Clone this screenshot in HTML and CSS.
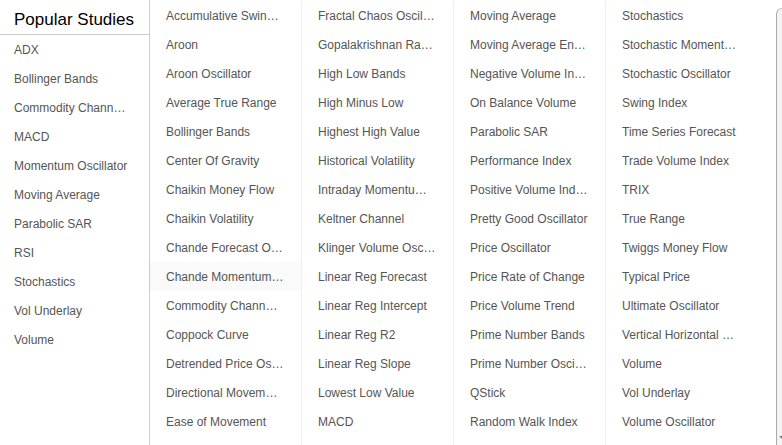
FILE: index.html
```html
<!DOCTYPE html>
<html>
<head>
<meta charset="utf-8">
<link rel="stylesheet" href="styles.css">
</head>
<body>
<div class="page">
  <div class="side">
    <div class="side-title">Popular Studies</div>
    <ul class="side-list">
      <li>ADX</li>
      <li>Bollinger Bands</li>
      <li>Commodity Chann…</li>
      <li>MACD</li>
      <li>Momentum Oscillator</li>
      <li>Moving Average</li>
      <li>Parabolic SAR</li>
      <li>RSI</li>
      <li>Stochastics</li>
      <li>Vol Underlay</li>
      <li>Volume</li>
    </ul>
  </div>
  <div class="cols">
    <ul class="col">
      <li>Accumulative Swing Index</li>
      <li>Aroon</li>
      <li>Aroon Oscillator</li>
      <li>Average True Range</li>
      <li>Bollinger Bands</li>
      <li>Center Of Gravity</li>
      <li>Chaikin Money Flow</li>
      <li>Chaikin Volatility</li>
      <li>Chande Forecast Oscillator</li>
      <li class="hover">Chande Momentum Oscillator</li>
      <li>Commodity Channel Index</li>
      <li>Coppock Curve</li>
      <li>Detrended Price Oscillator</li>
      <li>Directional Movement System</li>
      <li>Ease of Movement</li>
    </ul>
    <ul class="col">
      <li>Fractal Chaos Oscillator</li>
      <li>Gopalakrishnan Range Index</li>
      <li>High Low Bands</li>
      <li>High Minus Low</li>
      <li>Highest High Value</li>
      <li>Historical Volatility</li>
      <li>Intraday Momentum Index</li>
      <li>Keltner Channel</li>
      <li>Klinger Volume Oscillator</li>
      <li>Linear Reg Forecast</li>
      <li>Linear Reg Intercept</li>
      <li>Linear Reg R2</li>
      <li>Linear Reg Slope</li>
      <li>Lowest Low Value</li>
      <li>MACD</li>
    </ul>
    <ul class="col">
      <li>Moving Average</li>
      <li>Moving Average Envelope</li>
      <li>Negative Volume Index</li>
      <li>On Balance Volume</li>
      <li>Parabolic SAR</li>
      <li>Performance Index</li>
      <li>Positive Volume Index</li>
      <li>Pretty Good Oscillator</li>
      <li>Price Oscillator</li>
      <li>Price Rate of Change</li>
      <li>Price Volume Trend</li>
      <li>Prime Number Bands</li>
      <li>Prime Number Oscillator</li>
      <li>QStick</li>
      <li>Random Walk Index</li>
    </ul>
    <ul class="col">
      <li>Stochastics</li>
      <li>Stochastic Momentum Index</li>
      <li>Stochastic Oscillator</li>
      <li>Swing Index</li>
      <li>Time Series Forecast</li>
      <li>Trade Volume Index</li>
      <li>TRIX</li>
      <li>True Range</li>
      <li>Twiggs Money Flow</li>
      <li>Typical Price</li>
      <li>Ultimate Oscillator</li>
      <li>Vertical Horizontal Filter</li>
      <li>Volume</li>
      <li>Vol Underlay</li>
      <li>Volume Oscillator</li>
    </ul>
  </div>
  <div class="scroll">
    <div class="thumb"></div>
    <div class="arrow"></div>
  </div>
</div>
</body>
</html>
```
FILE: styles.css
```css
html, body {
  margin: 0;
  padding: 0;
  background: #fff;
}
body {
  font-family: "Liberation Sans", Arial, sans-serif;
  font-size: 12px;
  color: #555;
}
ul {
  list-style: none;
  margin: 0;
  padding: 0;
}
.page {
  display: flex;
  width: 782px;
  height: 445px;
  overflow: hidden;
}
.side {
  width: 149px;
  flex: none;
  border-right: 1px solid #ccc;
}
.side-title {
  height: 35px;
  box-sizing: border-box;
  padding: 10px 0 0 14px;
  font-size: 17px;
  color: #000;
  border-bottom: 1px solid #ccc;
  line-height: 19px;
}
.side-list {
  padding-top: 1px;
}
.side-list li {
  height: 29px;
  line-height: 29px;
  padding-left: 14px;
  white-space: nowrap;
}
.cols {
  display: flex;
  flex: none;
  padding-top: 1px;
}
.col {
  width: 151px;
  border-right: 1px solid #eee;
}
.col:last-child {
  border-right: none;
}
.col li {
  height: 29px;
  line-height: 30px;
  padding: 0 17px 0 16px;
  white-space: nowrap;
  overflow: hidden;
  text-overflow: ellipsis;
}
.col li.hover {
  background: #fafafa;
}
.scroll {
  margin-left: auto;
  width: 6px;
  flex: none;
  display: flex;
  flex-direction: column;
  padding-top: 8px;
}
.thumb {
  flex: 1;
  border-left: 1px solid #aaa;
  border-top: 1px solid #bbb;
  border-top-left-radius: 6px;
  background: #f4f4f4;
}
.arrow {
  height: 14px;
  border-left: 1px solid #aaa;
  background: #f4f4f4;
  position: relative;
}
.arrow::after {
  content: "";
  position: absolute;
  left: 2px;
  top: 5px;
  border-left: 3px solid transparent;
  border-right: 3px solid transparent;
  border-top: 3px solid #777;
}
```
